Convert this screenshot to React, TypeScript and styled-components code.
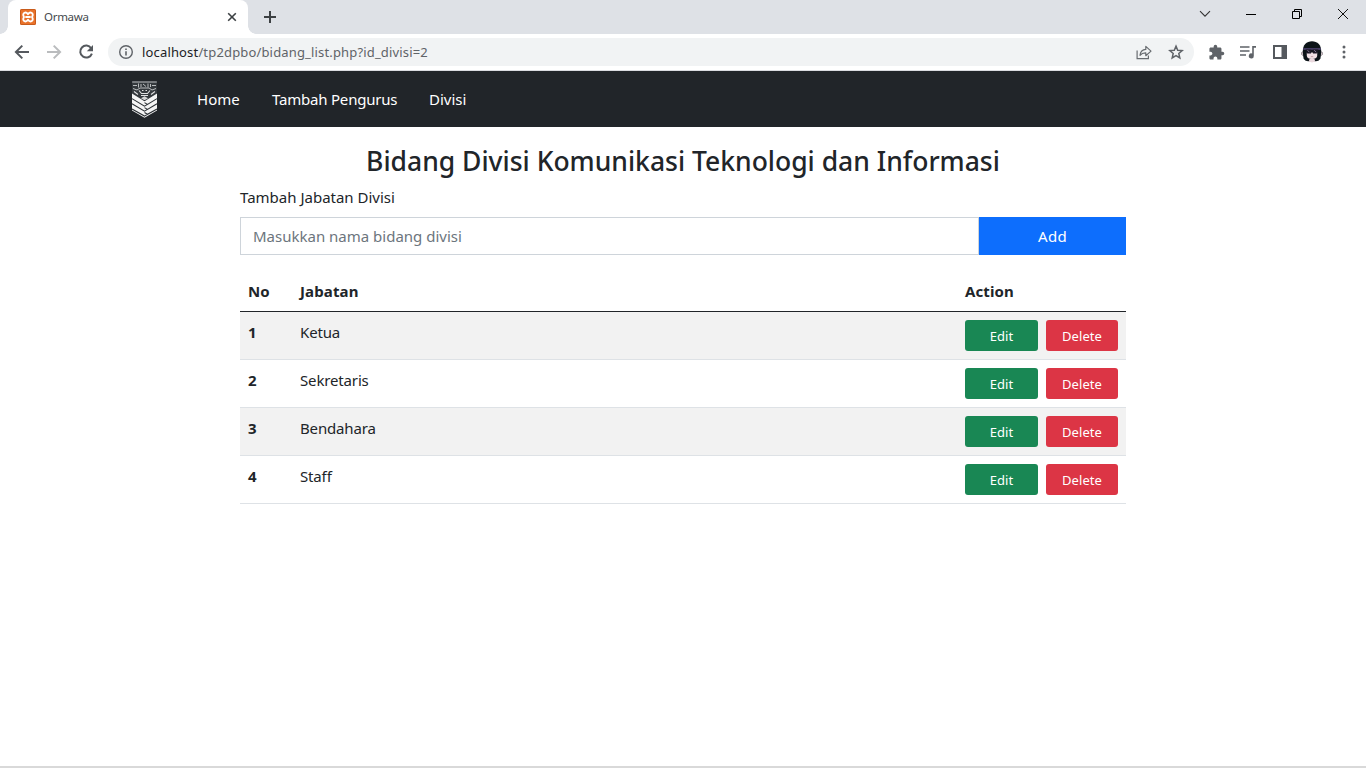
import React from "react";
import styled, { createGlobalStyle } from "styled-components";

const GlobalStyle = createGlobalStyle`
  * { box-sizing: border-box; }
  html, body { margin: 0; padding: 0; overflow: hidden; background: #fff; }
  body { font-family: "Noto Sans", "Open Sans", sans-serif; font-size: 15px; color: #212529; }
  button, input { font-family: inherit; }
`;

const Window = styled.div`
  width: 1366px;
  height: 768px;
  display: flex;
  flex-direction: column;
  overflow: hidden;
`;

const TabStrip = styled.div`
  height: 34px;
  flex: none;
  display: flex;
  background: #dee1e6;
  padding-left: 8px;
`;

const Tab = styled.div`
  position: relative;
  width: 240px;
  height: 34px;
  background: #fff;
  border-radius: 8px 8px 0 0;
  display: flex;
  align-items: center;
  padding: 0 11px 0 12px;
  &::before, &::after {
    content: "";
    position: absolute;
    bottom: 0;
    width: 8px;
    height: 8px;
  }
  &::before { left: -8px; background: radial-gradient(circle at 0 0, transparent 7.5px, #fff 8px); }
  &::after { right: -8px; background: radial-gradient(circle at 100% 0, transparent 7.5px, #fff 8px); }
`;

const TabTitle = styled.span`
  flex: 1;
  margin-left: 8px;
  font-size: 11.5px;
  letter-spacing: -0.3px;
  line-height: 16px;
  color: #45494d;
`;

const NewTab = styled.div`
  width: 44px;
  display: flex;
  align-items: center;
  justify-content: center;
`;

const WindowControls = styled.div`
  margin-left: auto;
  display: flex;
  height: 28px;
`;

const ControlButton = styled.div`
  width: 46px;
  display: flex;
  align-items: center;
  justify-content: center;
`;

const Toolbar = styled.div`
  height: 37px;
  flex: none;
  display: flex;
  align-items: center;
  background: #fff;
  border-bottom: 1px solid #dadce0;
  padding: 0 6px 0 6px;
`;

const ToolButton = styled.div`
  width: 32px;
  height: 32px;
  display: flex;
  align-items: center;
  justify-content: center;
`;

const AddressBar = styled.div`
  flex: 1;
  height: 28px;
  margin: 0 6px 0 6px;
  border-radius: 14px;
  background: #f1f3f4;
  display: flex;
  align-items: center;
  padding-left: 10px;
  padding-right: 2px;
`;

const Url = styled.span`
  flex: 1;
  margin-left: 8px;
  font-size: 13px;
  letter-spacing: 0.16px;
  line-height: 18px;
  color: #5f6368;
  b { font-weight: 400; color: #202124; }
`;

const Navbar = styled.nav`
  height: 56px;
  flex: none;
  display: flex;
  align-items: center;
  padding-left: 131px;
  background: #212529;
`;

const NavLinks = styled.div`
  display: flex;
  gap: 32px;
  margin-left: 39px;
`;

const NavLink = styled.a<{ $w: number; $ls: number }>`
  width: ${(p) => p.$w}px;
  white-space: nowrap;
  letter-spacing: ${(p) => p.$ls}px;
  line-height: 24px;
  color: #fff;
`;

const Main = styled.main`
  width: 886px;
  margin: 0 auto;
  flex: 1;
  display: flex;
  flex-direction: column;
`;

const Title = styled.h1`
  margin: 17px 0 7px;
  height: 34px;
  line-height: 34px;
  font-size: 26.5px;
  font-weight: 500;
  text-align: center;
  white-space: nowrap;
`;

const Label = styled.label`
  height: 24px;
  line-height: 24px;
  margin-bottom: 8px;
`;

const InputGroup = styled.div`
  display: flex;
  height: 38px;
`;

const TextInput = styled.input`
  width: 739px;
  border: 1px solid #ced4da;
  padding: 0 12px;
  font-size: 15px;
  outline: 0;
  color: #212529;
  &::placeholder { color: #6c757d; opacity: 1; }
`;

const AddButton = styled.button`
  flex: 1;
  border: 0;
  padding: 0;
  background: #0d6efd;
  color: #fff;
  font-size: 15px;
  letter-spacing: 0.3px;
`;

const Table = styled.table`
  width: 886px;
  margin-top: 16px;
  border-collapse: separate;
  border-spacing: 0;
  table-layout: fixed;
  text-align: left;
`;

const HeadCell = styled.th<{ $w: number }>`
  width: ${(p) => p.$w}px;
  height: 41px;
  padding: 8px 8px 7px;
  line-height: 25px;
  font-weight: 700;
  letter-spacing: 0.12px;
  border-bottom: 1px solid #212529;
`;

const Row = styled.tr<{ $striped: boolean }>`
  background: ${(p) => (p.$striped ? "#f2f2f2" : "#fff")};
`;

const Cell = styled.td<{ $bold?: boolean }>`
  height: 48px;
  padding: 8px 8px 7px;
  vertical-align: top;
  line-height: 24px;
  letter-spacing: -0.15px;
  font-weight: ${(p) => (p.$bold ? 700 : 400)};
  border-bottom: 1px solid #dee2e6;
`;

const Actions = styled.div`
  display: flex;
  gap: 8px;
`;

const ActionButton = styled.button<{ $danger?: boolean }>`
  width: ${(p) => (p.$danger ? 72 : 73)}px;
  height: 31px;
  padding: 1px 0 0;
  border: 0;
  border-radius: 3px;
  background: ${(p) => (p.$danger ? "#dc3545" : "#198754")};
  color: #fff;
  font-size: 13px;
  line-height: 30px;
  letter-spacing: 0.1px;
`;

const BottomEdge = styled.div`
  height: 2px;
  flex: none;
  background: #d9d9d9;
`;

const Favicon = () => (
  <svg width="16" height="16" viewBox="0 0 16 16">
    <rect width="16" height="16" rx="1.5" fill="#e9722a" />
    <rect x=".5" y=".5" width="15" height="15" rx="1.2" fill="none" stroke="#c75b1c" />
    <path
      d="M8 5.2C7 3.8 5.6 3.3 4.4 3.8 3 4.4 2.9 6.4 4 8 2.9 9.6 3 11.6 4.4 12.2 5.6 12.7 7 12.2 8 10.8 9 12.2 10.4 12.7 11.6 12.2 13 11.6 13.1 9.6 12 8 13.1 6.4 13 4.4 11.6 3.8 10.4 3.3 9 3.8 8 5.2z"
      fill="none" stroke="#fff" strokeWidth="1.9" strokeLinejoin="round"
    />
    <path d="M6 8h4" stroke="#fff" strokeWidth="1.9" strokeLinecap="round" />
  </svg>
);

const BackIcon = ({ color }: { color: string }) => (
  <svg width="16" height="16" viewBox="0 0 16 16" fill="none" stroke={color} strokeWidth="2">
    <path d="M15 8H2.4M8.3 1.6L1.9 8l6.4 6.4" />
  </svg>
);

const ForwardIcon = ({ color }: { color: string }) => (
  <svg width="16" height="16" viewBox="0 0 16 16" fill="none" stroke={color} strokeWidth="2">
    <path d="M1 8h12.6M7.7 1.6L14.1 8l-6.4 6.4" />
  </svg>
);

const ReloadIcon = () => (
  <svg width="16" height="16" viewBox="0 0 16 16">
    <path d="M13.2 4.2A6 6 0 1 0 13.9 9.6" fill="none" stroke="#55595e" strokeWidth="2" />
    <path d="M15 1v6.2H8.8z" fill="#55595e" />
  </svg>
);

const InfoIcon = () => (
  <svg width="16" height="16" viewBox="0 0 16 16">
    <circle cx="8" cy="8" r="6.3" fill="none" stroke="#5f6368" strokeWidth="1.4" />
    <path d="M7.2 7.2h1.6v4.2H7.2zM7.2 4.5h1.6V6H7.2z" fill="#5f6368" />
  </svg>
);

const ShareIcon = () => (
  <svg width="18" height="18" viewBox="0 0 18 18" fill="none" stroke="#686c70" strokeWidth="1.2">
    <path d="M2.1 7.5v8.1h11.3v-3" />
    <path d="M5 12.3C5.4 8.8 7.4 6.6 10.8 6.4V3.4L16 8.1l-5.2 4.6V9.8C8.2 9.7 6.4 10.5 5 12.3z" strokeLinejoin="round" />
  </svg>
);

const StarIcon = () => (
  <svg width="16" height="16" viewBox="0 0 16 16" fill="none" stroke="#5f6368" strokeWidth="1.5">
    <path d="M8 2.1l1.7 4.1 4.5.4-3.4 2.9 1 4.4L8 11.6l-3.8 2.3 1-4.4L1.8 6.6l4.5-.4z" />
  </svg>
);

const PuzzleIcon = () => (
  <svg width="17" height="17" viewBox="0 0 24 24" fill="#5f6368">
    <path d="M20.5 11H19V7c0-1.1-.9-2-2-2h-4V3.5a2.5 2.5 0 0 0-5 0V5H4c-1.1 0-2 .9-2 2v3.8h1.5c1.5 0 2.7 1.2 2.7 2.7S5 16.2 3.5 16.2H2V20c0 1.1.9 2 2 2h3.8v-1.5c0-1.5 1.2-2.7 2.7-2.7s2.7 1.2 2.7 2.7V22H17c1.1 0 2-.9 2-2v-4h1.5a2.5 2.5 0 0 0 0-5z" />
  </svg>
);

const QueueMusicIcon = () => (
  <svg width="18" height="16" viewBox="0 0 18 16">
    <path d="M1 3h9.5M1 7h9.5M1 11h6" stroke="#5f6368" strokeWidth="1.7" />
    <path d="M13.2 2H17v1.8h-2.2v8.1a2.5 2.5 0 1 1-1.6-2.3z" fill="#5f6368" />
  </svg>
);

const SidePanelIcon = () => (
  <svg width="14" height="14" viewBox="0 0 14 14">
    <rect x="1" y="1" width="12" height="12" fill="#fff" stroke="#55595e" strokeWidth="2" />
    <path d="M8.5 1H13v12H8.5z" fill="#55595e" />
  </svg>
);

const Avatar = () => (
  <svg width="22" height="22" viewBox="0 0 22 22">
    <path d="M2.5 10.5L.6 11.4.5 13.5 2.6 15M19.5 10.5l1.9.9.1 2.1-2.1 1.5" fill="#ddd0d4" stroke="#7c747b" strokeWidth=".7" />
    <path d="M2.6 17.5C1.6 12 1 6.5 4.2 3 7.6-.6 14.4-.6 17.8 3c3.2 3.5 2.6 9 1.6 14.5-1 2.1-3 2.7-4.4 2.7H7c-1.4 0-3.4-.6-4.4-2.7z" fill="#0c1418" />
    <path d="M5.8 11.5h10.4v3.2c0 2.2-2.4 3.3-5.2 3.3s-5.2-1.1-5.2-3.3z" fill="#efe0e4" />
    <path d="M2.2 7.4h17.6v1.2H2.2z" fill="#6b5794" />
    <path d="M4.6 8.6h6l-.6 3.8H6.2zM11.4 8.6h6l-1.6 3.8H12z" fill="#1a1724" />
    <path d="M6.5 9.2l1.9 2M13.2 9.2l1.9 2" stroke="#9b91ac" strokeWidth=".8" />
    <path d="M9.8 15.6h2.4" stroke="#b58a92" strokeWidth=".7" />
    <path d="M8.6 17.8h4.8l.8 2.6-3.2 1.2-3.2-1.2z" fill="#ead9de" />
  </svg>
);

const DotsIcon = () => (
  <svg width="4" height="14" viewBox="0 0 4 14" fill="#5f6368">
    <circle cx="2" cy="2" r="1.5" />
    <circle cx="2" cy="7" r="1.5" />
    <circle cx="2" cy="12" r="1.5" />
  </svg>
);

const Crest = () => (
  <svg width="27" height="38" viewBox="0 0 27 38">
    <path d="M1 1.5h25V15l-9 5h-7l-9-5z" fill="#34393d" />
    <path d="M1.2 2h24.6" stroke="#a6aaad" strokeWidth="1.2" />
    <path
      d="M2 5.5h4M7.5 3.5v4M10 4v3M12 4l3 2.5M17 3.5v4M19.5 4v3M21 5.5h4M2 8.5l4 1.5 3-2h9l3 2 4-1.5"
      fill="none" stroke="#b9bcbe" strokeWidth="1"
    />
    <path d="M3 11.5l4 3M24 11.5l-4 3M8 10.5l2.5 3h6l2.5-3M11 10.5h1.5M14.5 10.5H16M10 15.5h7" fill="none" stroke="#e0e1e2" strokeWidth="1.1" />
    <path d="M1 13.6l12.5 7.6L26 13.6v16.8l-12.5 7.3L1 30.4z" fill="#f5f5f5" />
    <path
      d="M1 18.6l12.5 7.6 3-1.8M26 18.6l-9.5 5.8-3-1.8M1 23.8l12.5 7.4 3-1.8M26 23.8l-9.5 5.6-3-1.8M1 28.9l12.5 7.2 3-1.8M26 28.9l-9.5 5.4-3-1.8"
      fill="none" stroke="#2b3034" strokeWidth="1.1"
    />
    <path d="M10 18.2l3.5-2 3.5 2-3.5 2z" fill="#d4d5d6" />
  </svg>
);

const positions = ["Ketua", "Sekretaris", "Bendahara", "Staff"];

const navItems = [
  { text: "Home", w: 43, ls: 0.05 },
  { text: "Tambah Pengurus", w: 125, ls: -0.2 },
  { text: "Divisi", w: 40, ls: 0 },
];

export default function App() {
  return (
    <Window>
      <GlobalStyle />
      <TabStrip>
        <Tab>
          <Favicon />
          <TabTitle>Ormawa</TabTitle>
          <svg width="10" height="10" viewBox="0 0 10 10" stroke="#3c4043" strokeWidth="1.6">
            <path d="M1.2 1.2l7.6 7.6M8.8 1.2L1.2 8.8" />
          </svg>
        </Tab>
        <NewTab>
          <svg width="12" height="12" viewBox="0 0 12 12" stroke="#3c4043" strokeWidth="2">
            <path d="M6 0v12M0 6h12" />
          </svg>
        </NewTab>
        <WindowControls>
          <ControlButton>
            <svg width="12" height="8" viewBox="0 0 12 8" fill="none" stroke="#333" strokeWidth="1.1">
              <path d="M1 1.2l5 5 5-5" />
            </svg>
          </ControlButton>
          <ControlButton>
            <svg width="10" height="11" viewBox="0 0 10 11"><path d="M0 5h10v1H0z" /></svg>
          </ControlButton>
          <ControlButton>
            <svg width="10" height="10" viewBox="0 0 10 10" fill="none" stroke="#000">
              <path d="M.5 2.5h7v7h-7zM2.5 2.5v-2h7v7h-2" />
            </svg>
          </ControlButton>
          <ControlButton>
            <svg width="10" height="10" viewBox="0 0 10 10" stroke="#111" strokeWidth="1">
              <path d="M0 0l10 10M10 0L0 10" />
            </svg>
          </ControlButton>
        </WindowControls>
      </TabStrip>
      <Toolbar>
        <ToolButton><BackIcon color="#55595e" /></ToolButton>
        <ToolButton><ForwardIcon color="#babcbe" /></ToolButton>
        <ToolButton><ReloadIcon /></ToolButton>
        <AddressBar>
          <InfoIcon />
          <Url><b>localhost</b>/tp2dpbo/bidang_list.php?id_divisi=2</Url>
          <ToolButton><ShareIcon /></ToolButton>
          <ToolButton><StarIcon /></ToolButton>
        </AddressBar>
        <ToolButton><PuzzleIcon /></ToolButton>
        <ToolButton><QueueMusicIcon /></ToolButton>
        <ToolButton><SidePanelIcon /></ToolButton>
        <ToolButton><Avatar /></ToolButton>
        <ToolButton><DotsIcon /></ToolButton>
      </Toolbar>
      <Navbar>
        <Crest />
        <NavLinks>
          {navItems.map((n) => (
            <NavLink key={n.text} $w={n.w} $ls={n.ls}>{n.text}</NavLink>
          ))}
        </NavLinks>
      </Navbar>
      <Main>
        <Title>Bidang Divisi Komunikasi Teknologi dan Informasi</Title>
        <Label>Tambah Jabatan Divisi</Label>
        <InputGroup>
          <TextInput placeholder="Masukkan nama bidang divisi" />
          <AddButton>Add</AddButton>
        </InputGroup>
        <Table>
          <thead>
            <tr>
              <HeadCell $w={52}>No</HeadCell>
              <HeadCell $w={665}>Jabatan</HeadCell>
              <HeadCell $w={169}>Action</HeadCell>
            </tr>
          </thead>
          <tbody>
            {positions.map((name, i) => (
              <Row key={name} $striped={i % 2 === 0}>
                <Cell $bold>{i + 1}</Cell>
                <Cell>{name}</Cell>
                <Cell>
                  <Actions>
                    <ActionButton>Edit</ActionButton>
                    <ActionButton $danger>Delete</ActionButton>
                  </Actions>
                </Cell>
              </Row>
            ))}
          </tbody>
        </Table>
      </Main>
      <BottomEdge />
    </Window>
  );
}
